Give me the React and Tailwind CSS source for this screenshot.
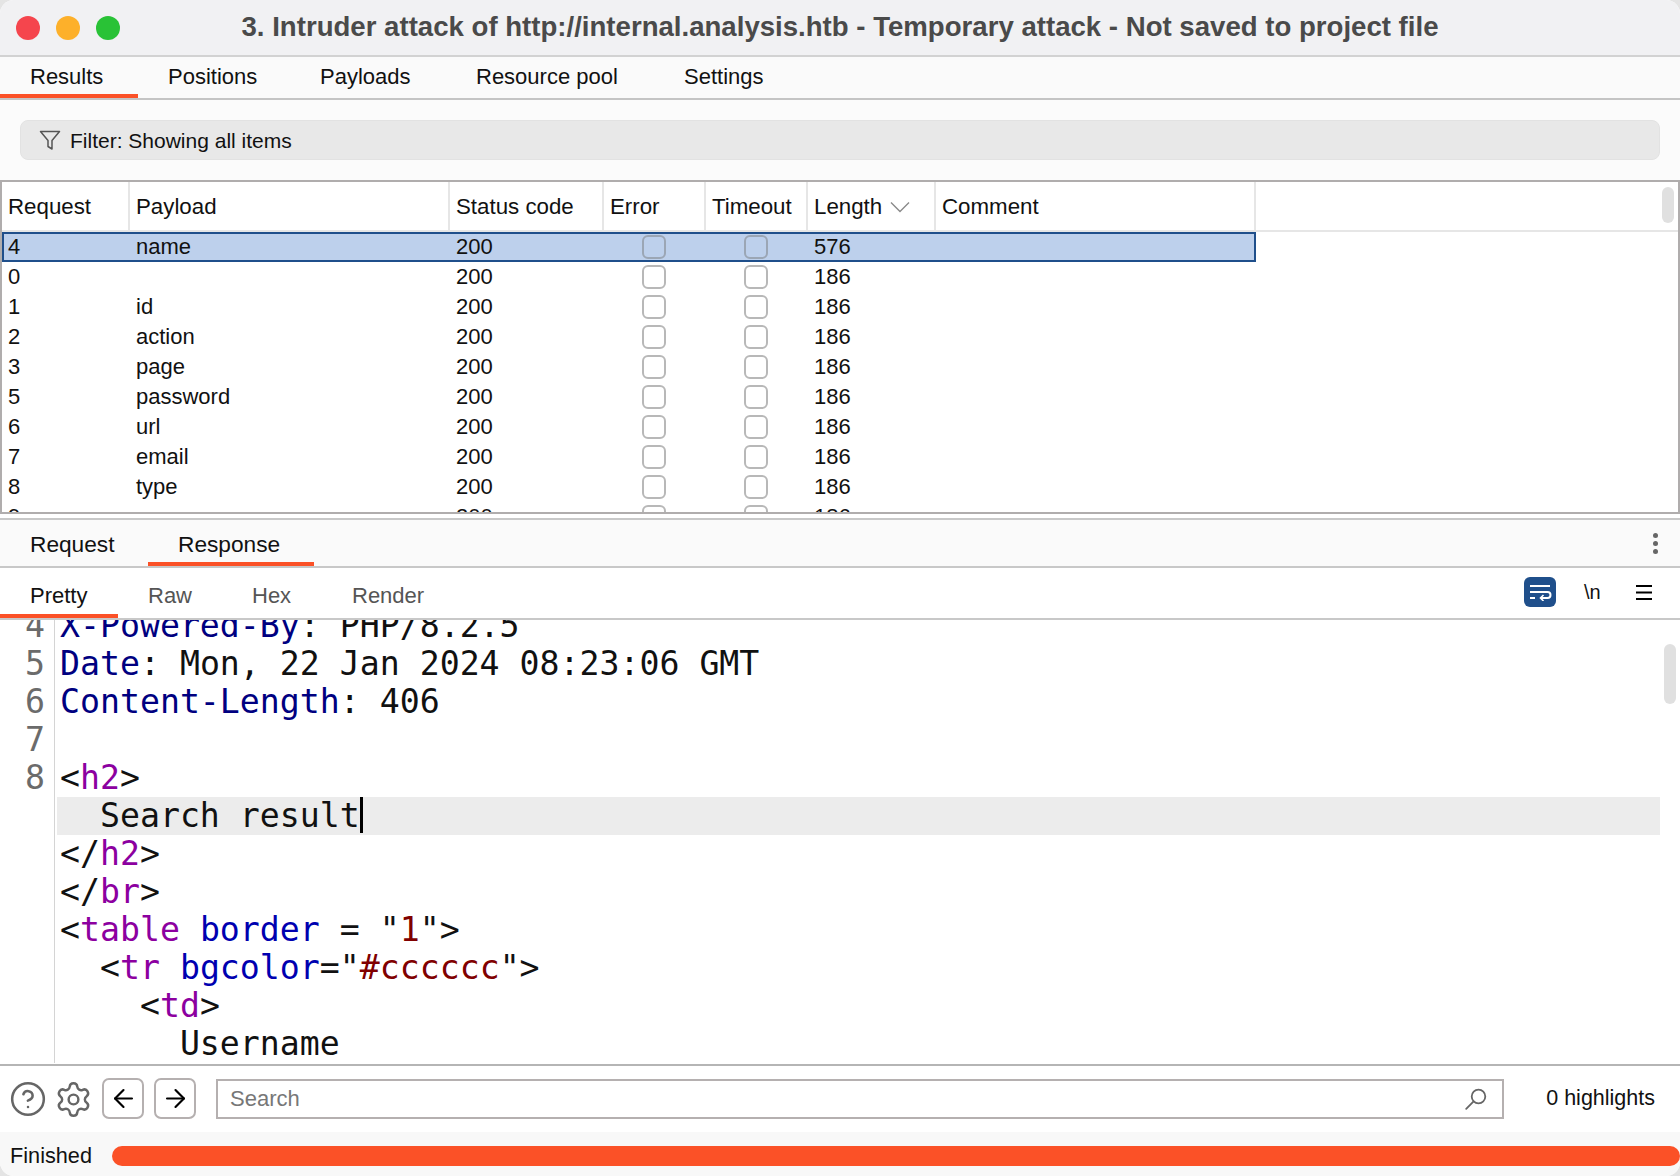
import React from 'react';
import { ArrowLeft, ArrowRight, CircleHelp, Settings } from 'lucide-react';

const SANS = 'font-["Liberation_Sans",Arial,sans-serif]';

const ROWS = [
  ['4', 'name', '576'],
  ['0', '', '186'],
  ['1', 'id', '186'],
  ['2', 'action', '186'],
  ['3', 'page', '186'],
  ['5', 'password', '186'],
  ['6', 'url', '186'],
  ['7', 'email', '186'],
  ['8', 'type', '186'],
  ['9', 'user', '186'],
];

const COLS = 'grid grid-cols-[128px_320px_154px_102px_102px_128px_320px] w-[1254px]';

// syntax colours used by the message editor
const N = ({ children }) => <span className="text-[#000080]">{children}</span>;
const T = ({ children }) => <span className="text-[#8c00a0]">{children}</span>;
const A = ({ children }) => <span className="text-[#0000b0]">{children}</span>;
const V = ({ children }) => <span className="text-[#800000]">{children}</span>;

const LINES = [
  { n: '4', c: <><N>X-Powered-By</N>: PHP/8.2.5</> },
  { n: '5', c: <><N>Date</N>: Mon, 22 Jan 2024 08:23:06 GMT</> },
  { n: '6', c: <><N>Content-Length</N>: 406</> },
  { n: '7', c: ' ' },
  { n: '8', c: <>&lt;<T>h2</T>&gt;</> },
  { n: '', c: '  Search result', active: true },
  { n: '', c: <>&lt;/<T>h2</T>&gt;</> },
  { n: '', c: <>&lt;/<T>br</T>&gt;</> },
  { n: '', c: <>&lt;<T>table</T> <A>border</A> = "<V>1</V>"&gt;</> },
  { n: '', c: <>  &lt;<T>tr</T> <A>bgcolor</A>="<V>#cccccc</V>"&gt;</> },
  { n: '', c: <>    &lt;<T>td</T>&gt;</> },
  { n: '', c: '      Username' },
];

const Tab = ({ label, width, active, muted, textPad = '' }) => (
  <div className={`relative flex h-full shrink-0 items-center pl-[30px] ${width} ${textPad} ${muted ? 'text-[#555]' : 'text-[#111]'}`}>
    {label}
    {active && <div className="absolute bottom-0 left-0 right-0 h-[4px] bg-[#fb5127]" />}
  </div>
);

const Checkbox = ({ selected }) => (
  <div className={`ml-[38px] h-[24px] w-[24px] rounded-[6px] border-2 ${selected ? 'border-[#9ba6b5]' : 'border-[#b8b8b8] bg-white'}`} />
);

const IconBtn = ({ children }) => (
  <div className="flex h-[41px] w-[42px] items-center justify-center rounded-[7px] border-2 border-[#b5b0b0] text-black">
    {children}
  </div>
);

export default function App() {
  return (
    <div className="h-[1176px] w-[1680px] overflow-hidden bg-[#e4e4e4]">
      <div className={`flex h-full w-full flex-col overflow-hidden rounded-[14px] bg-white text-[22px] leading-none text-[#111] ${SANS}`}>
        {/* title bar */}
        <div className="relative flex h-[57px] shrink-0 items-center justify-center border-b-2 border-[#d2d2d2] bg-[#f1f1f3]">
          <div className="absolute left-[16px] top-[16px] flex gap-[16px]">
            <div className="h-[24px] w-[24px] rounded-full bg-[#f5454d]" />
            <div className="h-[24px] w-[24px] rounded-full bg-[#fdb02a]" />
            <div className="h-[24px] w-[24px] rounded-full bg-[#29c236]" />
          </div>
          <span className="pb-[2px] text-[27.6px] font-bold text-[#4a4a4a]">
            3. Intruder attack of http://internal.analysis.htb - Temporary attack - Not saved to project file
          </span>
        </div>

        {/* attack tabs */}
        <div className="flex h-[43px] shrink-0 border-b-2 border-[#c4c4c4] bg-[#fafafa]">
          <Tab label="Results" width="w-[138px]" textPad="pb-[2px]" active />
          <Tab label="Positions" width="w-[152px]" textPad="pb-[2px]" />
          <Tab label="Payloads" width="w-[156px]" textPad="pb-[2px]" />
          <Tab label="Resource pool" width="w-[208px]" textPad="pb-[2px]" />
          <Tab label="Settings" width="w-[200px]" textPad="pb-[2px]" />
        </div>

        {/* filter */}
        <div className="flex h-[80px] shrink-0 items-center bg-[#fbfbfb] px-[20px]">
          <div className="flex h-[40px] w-full items-center gap-[9px] rounded-[8px] border border-[#e2e2e2] bg-[#e8e8e8] pl-[18px] text-[21px]">
            <svg width="22" height="22" viewBox="0 0 22 22" fill="none" stroke="#555" strokeWidth="1.5" strokeLinejoin="round">
              <path d="M1.5 2.5h19l-7.5 9v8.5l-4-2.5v-6z" />
            </svg>
            <span>Filter: Showing all items</span>
          </div>
        </div>

        {/* results table */}
        <div className="relative h-[334px] shrink-0 overflow-hidden border-2 border-[#b0adad] bg-white">
          <div className="h-[50px] border-b-2 border-[#e6e6e6] pr-[18px] text-[22.3px]">
            <div className={`${COLS} h-full`}>
              {['Request', 'Payload', 'Status code', 'Error', 'Timeout'].map((h) => (
                <div key={h} className="flex items-center border-r-2 border-[#e6e6e6] pl-[6px] pt-[2px]">{h}</div>
              ))}
              <div className="flex items-center border-r-2 border-[#e6e6e6] pl-[6px] pt-[2px]">
                Length
                <svg className="ml-[8px]" width="20" height="12" viewBox="0 0 20 12" fill="none" stroke="#8a8a8a" strokeWidth="1.4">
                  <path d="M1 1.5l9 9 9-9" />
                </svg>
              </div>
              <div className="flex items-center border-r-2 border-[#e6e6e6] pl-[6px] pt-[2px]">Comment</div>
            </div>
          </div>
          {ROWS.map((row, i) => (
            <div
              key={row[0]}
              className={`${COLS} h-[30px] items-center ${i === 0 ? 'bg-[#bdd0ec] outline-2 -outline-offset-2 outline-[#1f4f8b]' : ''}`}
            >
              <div className="pl-[6px]">{row[0]}</div>
              <div className="pl-[6px]">{row[1]}</div>
              <div className="pl-[6px]">200</div>
              <div><Checkbox selected={i === 0} /></div>
              <div><Checkbox selected={i === 0} /></div>
              <div className="pl-[6px]">{row[2]}</div>
              <div />
            </div>
          ))}
          <div className="absolute right-[4px] top-[5px] h-[36px] w-[12px] rounded-full bg-[#e0e0e0]" />
        </div>

        {/* request / response tabs */}
        <div className="h-[6px] shrink-0 border-b-2 border-[#c8c8c8] bg-white" />
        <div className="flex h-[48px] shrink-0 items-stretch border-b-2 border-[#c8c8c8] bg-[#fafafa] text-[22.7px]">
          <div className="flex w-[148px] items-center pl-[30px] pt-[3px]">Request</div>
          <div className="relative flex w-[166px] items-center pl-[30px] pt-[3px]">
            Response
            <div className="absolute bottom-0 left-0 right-0 h-[4px] bg-[#fb5127]" />
          </div>
          <div className="ml-auto flex w-[50px] flex-col items-center justify-center gap-[3px] pl-[1px]">
            <div className="h-[5px] w-[5px] rounded-full bg-[#666]" />
            <div className="h-[5px] w-[5px] rounded-full bg-[#666]" />
            <div className="h-[5px] w-[5px] rounded-full bg-[#666]" />
          </div>
        </div>

        {/* view tabs */}
        <div className="flex h-[52px] shrink-0 items-stretch border-b-2 border-[#c8c8c8] bg-white pr-[28px]">
          <Tab label="Pretty" width="w-[118px]" textPad="pt-[5px]" active />
          <Tab label="Raw" width="w-[104px]" textPad="pt-[5px]" muted />
          <Tab label="Hex" width="w-[100px]" textPad="pt-[5px]" muted />
          <Tab label="Render" width="w-[200px]" textPad="pt-[5px]" muted />
          <div className="ml-auto flex items-center pb-[2px]">
            <div className="flex h-[30px] w-[32px] items-center justify-center rounded-[6px] bg-[#1f4f8b]">
              <svg width="24" height="18" viewBox="0 0 24 18" fill="none" stroke="#fff" strokeWidth="2">
                <path d="M2 3h20M2 9h17.5a3 3 0 0 1 0 6H13M2 15h5" />
                <path d="M15.5 12l-3 3 3 3" strokeWidth="1.6" />
              </svg>
            </div>
            <span className="ml-[28px] w-[17px] text-[20px]">\n</span>
            <svg className="ml-[35px]" width="16" height="15" viewBox="0 0 16 15" stroke="#000" strokeWidth="2">
              <path d="M0 1h16M0 7.5h16M0 14h16" />
            </svg>
          </div>
        </div>

        {/* message editor */}
        <div className="relative min-h-0 flex-1 overflow-hidden bg-white font-['DejaVu_Sans_Mono',monospace] text-[33.2px] leading-[38px] text-[#111]">
          <div className="-mt-[14px] pt-[1px]">
            {LINES.map((line, i) => (
              <div key={i} className="flex h-[38px]">
                <div className="w-[55px] shrink-0 border-r border-[#d4d4d4] pr-[9px] text-right text-[#6b6b6b]">{line.n}</div>
                <div className={`ml-[2px] mr-[20px] min-w-0 flex-1 whitespace-pre pl-[3px] ${line.active ? 'bg-[#ececec]' : ''}`}>
                  {line.c}
                  {line.active && <span className="inline-block h-[36px] w-[3px] bg-black align-top" />}
                </div>
              </div>
            ))}
          </div>
          <div className="absolute right-[4px] top-[24px] h-[60px] w-[12px] rounded-full bg-[#e0e0e0]" />
        </div>

        {/* search bar */}
        <div className="flex h-[68px] shrink-0 items-center border-t-2 border-[#b5b5b5] bg-white pl-[9px] pr-[25px]">
          <CircleHelp size={38} strokeWidth={1.6} className="text-[#666]" />
          <Settings size={39} strokeWidth={1.5} className="ml-[7px] text-[#666]" />
          <div className="ml-[9px] -mt-[2px]"><IconBtn><ArrowLeft size={29} strokeWidth={1.8} /></IconBtn></div>
          <div className="ml-[10px] -mt-[2px]"><IconBtn><ArrowRight size={29} strokeWidth={1.8} /></IconBtn></div>
          <div className="ml-[20px] flex h-[40px] w-[1288px] items-center justify-between border-2 border-[#b5b0b0] pl-[12px] pr-[15px] text-[#777]">
            Search
            <svg width="22" height="22" viewBox="0 0 22 22" fill="none" stroke="#666" strokeWidth="1.8">
              <circle cx="13.5" cy="8.5" r="6.8" />
              <path d="M8.6 13.4L1.2 20.8" strokeLinecap="round" />
            </svg>
          </div>
          <span className="ml-auto text-[21.5px]">0 highlights</span>
        </div>

        {/* status bar */}
        <div className="flex h-[44px] shrink-0 items-center bg-[#f8f8f8] pl-[10px] pt-[4px] text-[21.7px]">
          <span className="w-[102px]">Finished</span>
          <div className="h-[20px] flex-1 rounded-full bg-[#fb5127]" />
        </div>
      </div>
    </div>
  );
}
